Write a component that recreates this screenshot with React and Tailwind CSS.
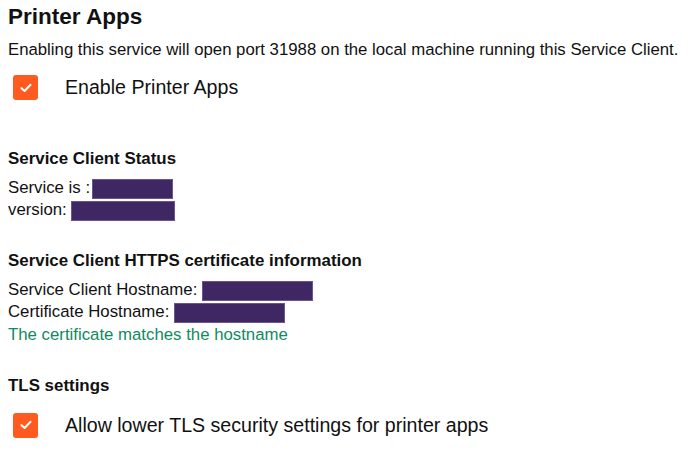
import React from "react";

function Check({ label }) {
  return (
    <label className="flex items-center gap-[27px] pl-[5px]">
      <span className="flex h-[25px] w-[25px] items-center justify-center rounded-[3px] bg-[#ff5a1f]">
        <svg width="12" height="10" viewBox="0 0 12 10" fill="none">
          <path
            d="M1.5 5.2 L4.6 8 L10.5 1.8"
            stroke="white"
            strokeWidth="2"
            strokeLinecap="round"
            strokeLinejoin="round"
          />
        </svg>
      </span>
      <span className="text-[19.6px] text-[#111]">{label}</span>
    </label>
  );
}

function Hidden({ w, className = "" }) {
  return (
    <span
      className={`inline-block h-[20px] align-middle bg-[#3e2763] border border-[#6a5590] ${className}`}
      style={{ width: w }}
    />
  );
}

export default function App() {
  return (
    <div className="bg-white px-[8px] pt-[2px] font-['Liberation_Sans',Arial,sans-serif] text-[#111]">
      <h1 className="text-[22.5px] font-bold leading-[30px]">Printer Apps</h1>

      <p className="mt-[7px] whitespace-nowrap text-[16.75px] leading-[22px]">
        Enabling this service will open port 31988 on the local machine running this Service Client.
      </p>

      <div className="mt-[12px]">
        <Check label="Enable Printer Apps" />
      </div>

      <h2 className="mt-[46px] text-[16.9px] font-bold leading-[22px]">Service Client Status</h2>
      <div className="mt-[7px] text-[16.8px] leading-[22px]">
        <div>
          Service is :<Hidden w={81} className="ml-[2px]" />
        </div>
        <div>
          version: <Hidden w={104} />
        </div>
      </div>

      <h2 className="mt-[29px] text-[16.9px] font-bold leading-[22px]">
        Service Client HTTPS certificate information
      </h2>
      <div className="mt-[7px] text-[16.8px] leading-[21px]">
        <div>
          Service Client Hostname: <Hidden w={111} />
        </div>
        <div>
          Certificate Hostname: <Hidden w={111} />
        </div>
        <div className="mt-[1px] text-[#118a5e]">The certificate matches the hostname</div>
      </div>

      <h2 className="mt-[30px] text-[16.9px] font-bold leading-[22px]">TLS settings</h2>
      <div className="mt-[14px]">
        <Check label="Allow lower TLS security settings for printer apps" />
      </div>
    </div>
  );
}
